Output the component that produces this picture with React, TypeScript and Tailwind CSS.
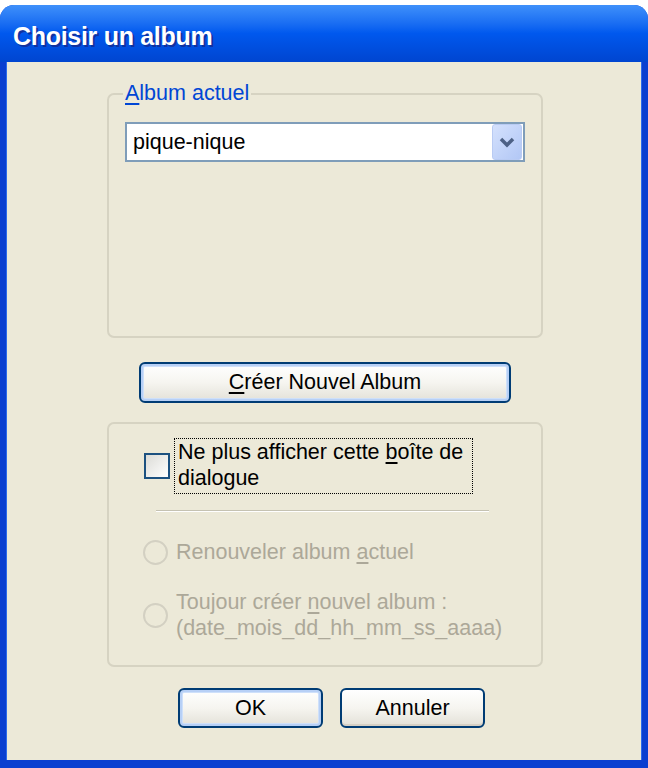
const font = "font-['Liberation_Sans',Arial,sans-serif]";

function DefaultButton({
  children,
  className = "",
  focused = false,
}: {
  children: React.ReactNode;
  className?: string;
  focused?: boolean;
}) {
  return (
    <button
      type="button"
      className={`flex items-center justify-center rounded-[6px] border-2 border-[#003C74] bg-gradient-to-b from-white via-[#F6F5F0] to-[#E3E1D8] text-[21.5px] text-black ${
        focused
          ? "shadow-[inset_0_0_0_2px_#B7D0F6,inset_0_0_0_3px_#CEE0FA]"
          : "shadow-[inset_0_-2px_0_#D6D0C5]"
      } ${className}`}
    >
      {children}
    </button>
  );
}

const ChoisirAlbum = () => {
  return (
    <div className={`w-[648px] h-[768px] bg-white pt-[5px] ${font}`}>
      <div className="flex h-[763px] flex-col overflow-hidden rounded-t-[14px] bg-[#0A3FD0]">
        {/* title bar */}
        <div className="flex h-[57px] shrink-0 items-center bg-gradient-to-b from-[#3F90FA] via-[#0058EE] to-[#0045D0] pl-[13px] pt-[7px]">
          <span className="text-[25px] font-bold tracking-[-0.3px] text-white [text-shadow:2px_2px_0_#1032A0]">
            Choisir un album
          </span>
        </div>

        {/* body */}
        <div className="mx-[6px] mb-[8px] flex flex-1 flex-col border-l border-r border-[#2D6BEA] bg-[#ECE9D8]">
          {/* Album actuel */}
          <div className="relative ml-[100px] mt-[31px] h-[245px] w-[436px] rounded-[7px] border-2 border-[#D6D3C2] px-[16px] pt-[27px]">
            <span className="absolute left-[14px] top-[-14px] bg-[#ECE9D8] px-[2px] text-[21.5px] leading-[24px] text-[#0046D5]">
              <span className="underline underline-offset-[3px]">A</span>lbum actuel
            </span>
            <div className="flex h-[40px] w-[400px] items-center justify-between border-2 border-[#7F9DB9] bg-white pl-[6px] pr-px">
              <span className="text-[21.5px] text-black">pique-nique</span>
              <div className="flex h-[36px] w-[30px] items-center justify-center rounded-[3px] border border-[#B9CBF3] bg-gradient-to-br from-[#D4E1FD] to-[#B2C7F5]">
                <svg width="16" height="12" viewBox="0 0 16 12">
                  <path d="M2 3 L8 9 L14 3" fill="none" stroke="#4D6185" strokeWidth="3.5" />
                </svg>
              </div>
            </div>
          </div>

          <DefaultButton focused className="ml-[132px] mt-[24px] h-[41px] w-[372px]">
            <span>
              <span className="underline underline-offset-[3px]">C</span>réer Nouvel Album
            </span>
          </DefaultButton>

          {/* options */}
          <div className="ml-[100px] mt-[19px] flex h-[245px] w-[436px] flex-col rounded-[7px] border-2 border-[#D6D3C2] pt-[14px]">
            <div className="flex items-center pl-[35px]">
              <div className="h-[26px] w-[26px] border-2 border-[#1C5180] bg-gradient-to-br from-[#DCDCD7] to-white" />
              <div className="ml-[4px] h-[56px] w-[299px] border border-dotted border-black pl-[3px] text-[21.5px] leading-[26px] text-black">
                Ne plus afficher cette <span className="underline underline-offset-[3px]">b</span>oîte de
                <br />
                dialogue
              </div>
            </div>

            <div className="ml-[47px] mt-[16px] h-[2px] w-[333px] border-t border-b border-t-[#C5C2B2] border-b-white" />

            <div className="mt-[27px] flex items-center pl-[34px] text-[21.5px] leading-[26px] text-[#ACA899]">
              <div className="h-[25px] w-[25px] rounded-full border-2 border-[#D3D0C2] bg-[#ECE9D8]" />
              <span className="ml-[8px]">
                Renouveler album <span className="underline underline-offset-[3px]">a</span>ctuel
              </span>
            </div>

            <div className="mt-[24px] flex items-center pl-[34px] text-[21.5px] leading-[26px] text-[#ACA899]">
              <div className="h-[25px] w-[25px] shrink-0 rounded-full border-2 border-[#D3D0C2] bg-[#ECE9D8]" />
              <span className="ml-[8px]">
                Toujour créer <span className="underline underline-offset-[3px]">n</span>ouvel album :
                <br />
                (date_mois_dd_hh_mm_ss_aaaa)
              </span>
            </div>
          </div>

          {/* buttons */}
          <div className="ml-[171px] mt-[21px] flex gap-[17px]">
            <DefaultButton focused className="h-[40px] w-[145px]">
              OK
            </DefaultButton>
            <DefaultButton className="h-[40px] w-[145px]">Annuler</DefaultButton>
          </div>
        </div>
      </div>
    </div>
  );
};

export default ChoisirAlbum;
